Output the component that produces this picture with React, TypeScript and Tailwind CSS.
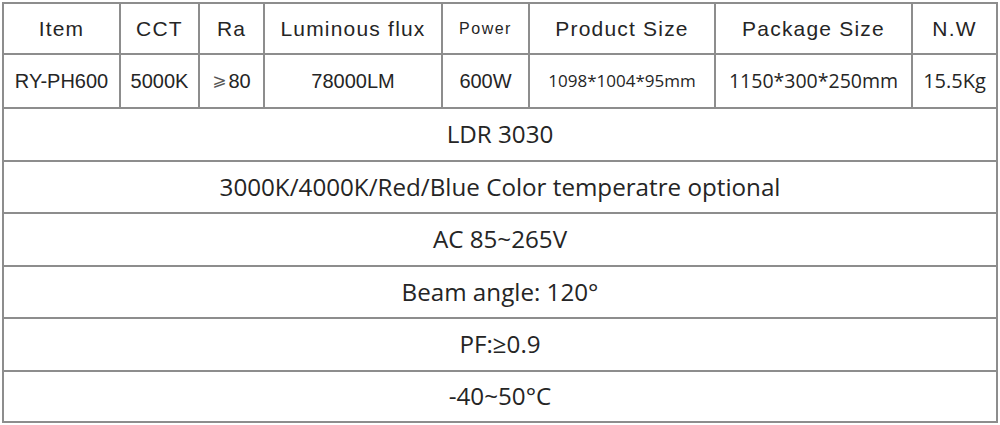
const HEAD = ["Item", "CCT", "Ra", "Luminous flux", "Power", "Product Size", "Package Size", "N.W"];

const arial = "font-['Liberation_Sans',Arial,sans-serif]";
const open = "font-['Open_Sans','DejaVu_Sans',sans-serif]";

const FULL_ROWS = [
  { text: "LDR 3030", h: "h-[53px]" },
  { text: "3000K/4000K/Red/Blue Color temperatre optional", h: "h-[52px]" },
  { text: "AC 85~265V", h: "h-[53px]" },
  { text: "Beam angle: 120°", h: "h-[52px]" },
  { text: "PF:≥0.9", h: "h-[53px]" },
  { text: "-40~50°C", h: "h-[49px]", last: true },
];

function Cell({ children, last, className }: { children: React.ReactNode; last?: boolean; className?: string }) {
  return (
    <div
      className={
        "flex items-center justify-center border-b-2 border-[#8d8d8d] text-[#252525] whitespace-nowrap " +
        (last ? "" : "border-r-2 ") +
        (className ?? "")
      }
    >
      {children}
    </div>
  );
}

export default function App() {
  return (
    <div className="w-[1000px] h-[425px] bg-white p-[2px]">
      <div className="w-[996px] border-2 border-[#8d8d8d]">
        {/* spec header + values */}
        <div className="grid grid-cols-[117px_79px_65px_178px_87px_186px_197px_83px] grid-rows-[51px_54px]">
          {HEAD.map((h, i) => (
            <Cell
              key={h}
              last={i === HEAD.length - 1}
              className={
                arial +
                (h === "Power" ? " text-[16px] tracking-[1.5px]" : " text-[21px] tracking-[1.2px]")
              }
            >
              {h}
            </Cell>
          ))}
          <Cell className={arial + " text-[20px]"}>RY-PH600</Cell>
          <Cell className={arial + " text-[20px]"}>5000K</Cell>
          <Cell className={arial + " text-[20px] gap-[2px]"}>
            <span className="font-['DejaVu_Sans',sans-serif] text-[17px] text-[#555]">⩾</span>
            80
          </Cell>
          <Cell className={arial + " text-[20px]"}>78000LM</Cell>
          <Cell className={arial + " text-[20px]"}>600W</Cell>
          <Cell className={open + " text-[17px]"}>1098*1004*95mm</Cell>
          <Cell className={open + " text-[19.5px]"}>1150*300*250mm</Cell>
          <Cell last className={open + " text-[20px]"}>15.5Kg</Cell>
        </div>

        {/* single-value rows */}
        {FULL_ROWS.map((r) => (
          <div
            key={r.text}
            className={
              "flex items-center justify-center text-[24.2px] text-[#252525] " +
              open +
              " " +
              r.h +
              (r.last ? "" : " border-b-2 border-[#8d8d8d]")
            }
          >
            {r.text}
          </div>
        ))}
      </div>
    </div>
  );
}
